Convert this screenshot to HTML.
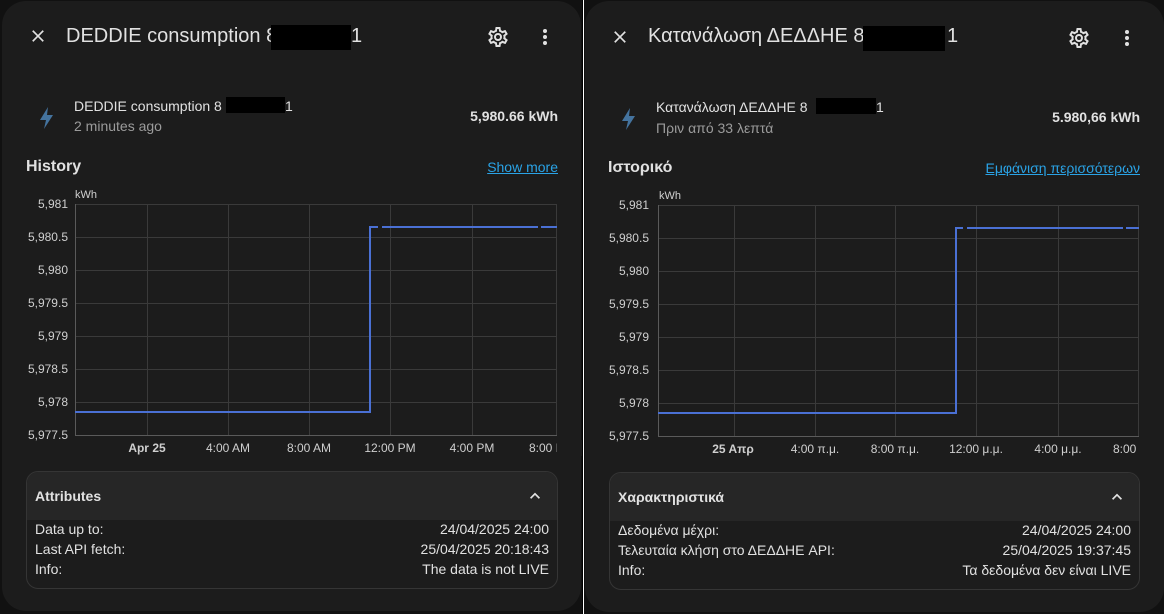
<!DOCTYPE html>
<html><head><meta charset="utf-8"><style>
*{margin:0;padding:0;box-sizing:border-box}
body{width:1164px;height:614px;background:#111;position:relative;overflow:hidden;font-family:"Liberation Sans","DejaVu Sans",sans-serif;color:#e1e1e1}
.p{position:absolute;top:1px;background:#1c1c1c;border-radius:24px;overflow:hidden}
.a{position:absolute;white-space:nowrap}
.r{text-align:right}
.blk{position:absolute;background:#000}
.box{position:absolute;border:1px solid #353535;border-radius:12px;overflow:hidden}
.hd{height:48px;background:#262626;position:relative}
.row{position:absolute;font-size:14px;color:#e1e1e1}
.t{font-size:20px}
</style></head><body>
<div style="position:absolute;left:582px;top:0;width:1px;height:614px;background:#000"></div>
<div style="position:absolute;left:583px;top:0;width:1px;height:614px;background:#fff"></div>

<!-- LEFT PANEL -->
<div class="p" style="left:2px;width:579px;height:610px">
 <svg class="a" style="left:26px;top:25px" width="20" height="20" viewBox="0 0 24 24"><path d="M19 6.4L17.6 5 12 10.6 6.4 5 5 6.4 10.6 12 5 17.6 6.4 19 12 13.4 17.6 19 19 17.6 13.4 12z" fill="#e1e1e1"/></svg>
 <div class="a t" style="left:64px;top:24px">DEDDIE consumption 8</div>
 <div class="blk" style="left:269px;top:24px;width:80px;height:25px"></div>
 <div class="a t" style="left:349px;top:24px">1</div>
 <svg class="a" style="left:484px;top:24px" width="24" height="24" viewBox="0 0 24 24"><path d="M12,8A4,4 0 0,1 16,12A4,4 0 0,1 12,16A4,4 0 0,1 8,12A4,4 0 0,1 12,8M12,10A2,2 0 0,0 10,12A2,2 0 0,0 12,14A2,2 0 0,0 14,12A2,2 0 0,0 12,10M10,22C9.75,22 9.54,21.82 9.5,21.58L9.13,18.93C8.5,18.68 7.96,18.34 7.44,17.94L4.95,18.95C4.73,19.03 4.46,18.95 4.34,18.73L2.34,15.27C2.21,15.05 2.27,14.78 2.46,14.63L4.57,12.97L4.5,12L4.57,11L2.46,9.37C2.27,9.22 2.21,8.95 2.34,8.73L4.34,5.27C4.46,5.05 4.73,4.96 4.95,5.05L7.44,6.05C7.96,5.66 8.5,5.32 9.13,5.07L9.5,2.42C9.54,2.18 9.75,2 10,2H14C14.25,2 14.46,2.18 14.5,2.42L14.87,5.07C15.5,5.32 16.04,5.66 16.56,6.05L19.05,5.05C19.27,4.96 19.54,5.05 19.66,5.27L21.66,8.73C21.79,8.95 21.73,9.22 21.54,9.37L19.43,11L19.5,12L19.43,13L21.54,14.63C21.73,14.78 21.79,15.05 21.66,15.27L19.66,18.73C19.54,18.95 19.27,19.04 19.05,18.95L16.56,17.95C16.04,18.34 15.5,18.68 14.87,18.93L14.5,21.58C14.46,21.82 14.25,22 14,22H10M11.25,4L10.88,6.61C9.68,6.86 8.62,7.5 7.85,8.39L5.44,7.35L4.69,8.65L6.8,10.2C6.4,11.37 6.4,12.64 6.8,13.8L4.68,15.36L5.43,16.66L7.86,15.62C8.63,16.5 9.68,17.14 10.87,17.38L11.24,20H12.76L13.13,17.39C14.32,17.14 15.37,16.5 16.14,15.62L18.57,16.66L19.32,15.36L17.2,13.81C17.6,12.64 17.6,11.37 17.2,10.2L19.31,8.65L18.56,7.35L16.15,8.39C15.38,7.5 14.32,6.86 13.12,6.62L12.75,4H11.25Z" fill="#e1e1e1"/></svg>
 <svg class="a" style="left:531px;top:24px" width="24" height="24" viewBox="0 0 24 24"><circle cx="12" cy="6" r="2" fill="#e1e1e1"/><circle cx="12" cy="12" r="2" fill="#e1e1e1"/><circle cx="12" cy="18" r="2" fill="#e1e1e1"/></svg>
 <svg class="a" style="left:35px;top:105px" width="20" height="24" viewBox="0 0 20 24"><path d="M11 1L3 14h6l-2 9 9-14h-6z" fill="#44739e"/></svg>
 <div class="a" style="left:72px;top:97px;font-size:14px">DEDDIE consumption 8</div>
 <div class="blk" style="left:224px;top:96px;width:59px;height:16px"></div>
 <div class="a" style="left:283px;top:97px;font-size:14px">1</div>
 <div class="a" style="left:72px;top:117px;font-size:14px;color:#9b9b9b">2 minutes ago</div>
 <div class="a r" style="right:23px;top:107px;font-size:14px;font-weight:bold">5,980.66 kWh</div>
 <div class="a" style="left:24px;top:157px;font-size:16px;font-weight:bold">History</div>
 <div class="a r" style="right:23px;top:158px;font-size:14px;color:#2aa3e6;text-decoration:underline">Show more</div>
</div>
<svg class="a" style="left:0;top:0" width="582" height="470" font-family="Liberation Sans,sans-serif" font-size="12" fill="#cfcfcf">
 <g stroke="#3a3a3a" stroke-width="1">
  <line x1="75" y1="204.5" x2="557" y2="204.5"/><line x1="75" y1="237.5" x2="557" y2="237.5"/><line x1="75" y1="270.5" x2="557" y2="270.5"/><line x1="75" y1="303.5" x2="557" y2="303.5"/><line x1="75" y1="336.5" x2="557" y2="336.5"/><line x1="75" y1="369.5" x2="557" y2="369.5"/><line x1="75" y1="402.5" x2="557" y2="402.5"/>
  <line x1="147.5" y1="204" x2="147.5" y2="435"/><line x1="228.5" y1="204" x2="228.5" y2="435"/><line x1="309.5" y1="204" x2="309.5" y2="435"/><line x1="390.5" y1="204" x2="390.5" y2="435"/><line x1="472.5" y1="204" x2="472.5" y2="435"/><line x1="556.5" y1="204" x2="556.5" y2="435"/>
 </g>
 <g stroke="#5a5a5a"><line x1="75.5" y1="204" x2="75.5" y2="436"/><line x1="75" y1="435.5" x2="557" y2="435.5"/></g>
 <path d="M75 412H370V227H378M382 227H538M541 227H557" stroke="#4a70d4" stroke-width="2" fill="none"/>
 <text x="75" y="198" font-size="11">kWh</text>
 <g text-anchor="end"><text x="68" y="208">5,981</text><text x="68" y="241">5,980.5</text><text x="68" y="274">5,980</text><text x="68" y="307">5,979.5</text><text x="68" y="340">5,979</text><text x="68" y="373">5,978.5</text><text x="68" y="406">5,978</text><text x="68" y="439">5,977.5</text></g>
 <g text-anchor="middle"><text x="147" y="452" font-weight="bold">Apr 25</text><text x="228" y="452">4:00 AM</text><text x="309" y="452">8:00 AM</text><text x="390" y="452">12:00 PM</text><text x="472" y="452">4:00 PM</text></g>
 <text x="529" y="452">8:00 P</text>
 <rect x="557" y="440" width="25" height="16" fill="#1c1c1c"/>
</svg>
<div class="box" style="left:26px;top:471px;width:532px;height:118px">
 <div class="hd"><div class="a" style="left:8px;top:16px;font-size:14px;font-weight:bold">Attributes</div>
 <svg class="a" style="right:12px;top:14px" width="20" height="20" viewBox="0 0 24 24"><path d="M7.4 15.4L12 10.8l4.6 4.6L18 14l-6-6-6 6z" fill="#e1e1e1"/></svg></div>
 <div class="row" style="left:8px;top:49px">Data up to:</div><div class="row" style="right:8px;top:49px">24/04/2025 24:00</div>
 <div class="row" style="left:8px;top:69px">Last API fetch:</div><div class="row" style="right:8px;top:69px">25/04/2025 20:18:43</div>
 <div class="row" style="left:8px;top:89px">Info:</div><div class="row" style="right:8px;top:89px">The data is not LIVE</div>
</div>

<!-- RIGHT PANEL -->
<div class="p" style="left:585px;width:579px;height:611px">
 <svg class="a" style="left:25px;top:26px" width="20" height="20" viewBox="0 0 24 24"><path d="M19 6.4L17.6 5 12 10.6 6.4 5 5 6.4 10.6 12 5 17.6 6.4 19 12 13.4 17.6 19 19 17.6 13.4 12z" fill="#e1e1e1"/></svg>
 <div class="a" style="left:63px;top:24px;font-size:20px">Κατανάλωση ΔΕΔΔΗΕ 8</div>
 <div class="blk" style="left:278px;top:25px;width:82px;height:25px"></div>
 <div class="a t" style="left:362px;top:24px">1</div>
 <svg class="a" style="left:482px;top:25px" width="24" height="24" viewBox="0 0 24 24"><path d="M12,8A4,4 0 0,1 16,12A4,4 0 0,1 12,16A4,4 0 0,1 8,12A4,4 0 0,1 12,8M12,10A2,2 0 0,0 10,12A2,2 0 0,0 12,14A2,2 0 0,0 14,12A2,2 0 0,0 12,10M10,22C9.75,22 9.54,21.82 9.5,21.58L9.13,18.93C8.5,18.68 7.96,18.34 7.44,17.94L4.95,18.95C4.73,19.03 4.46,18.95 4.34,18.73L2.34,15.27C2.21,15.05 2.27,14.78 2.46,14.63L4.57,12.97L4.5,12L4.57,11L2.46,9.37C2.27,9.22 2.21,8.95 2.34,8.73L4.34,5.27C4.46,5.05 4.73,4.96 4.95,5.05L7.44,6.05C7.96,5.66 8.5,5.32 9.13,5.07L9.5,2.42C9.54,2.18 9.75,2 10,2H14C14.25,2 14.46,2.18 14.5,2.42L14.87,5.07C15.5,5.32 16.04,5.66 16.56,6.05L19.05,5.05C19.27,4.96 19.54,5.05 19.66,5.27L21.66,8.73C21.79,8.95 21.73,9.22 21.54,9.37L19.43,11L19.5,12L19.43,13L21.54,14.63C21.73,14.78 21.79,15.05 21.66,15.27L19.66,18.73C19.54,18.95 19.27,19.04 19.05,18.95L16.56,17.95C16.04,18.34 15.5,18.68 14.87,18.93L14.5,21.58C14.46,21.82 14.25,22 14,22H10M11.25,4L10.88,6.61C9.68,6.86 8.62,7.5 7.85,8.39L5.44,7.35L4.69,8.65L6.8,10.2C6.4,11.37 6.4,12.64 6.8,13.8L4.68,15.36L5.43,16.66L7.86,15.62C8.63,16.5 9.68,17.14 10.87,17.38L11.24,20H12.76L13.13,17.39C14.32,17.14 15.37,16.5 16.14,15.62L18.57,16.66L19.32,15.36L17.2,13.81C17.6,12.64 17.6,11.37 17.2,10.2L19.31,8.65L18.56,7.35L16.15,8.39C15.38,7.5 14.32,6.86 13.12,6.62L12.75,4H11.25Z" fill="#e1e1e1"/></svg>
 <svg class="a" style="left:530px;top:25px" width="24" height="24" viewBox="0 0 24 24"><circle cx="12" cy="6" r="2" fill="#e1e1e1"/><circle cx="12" cy="12" r="2" fill="#e1e1e1"/><circle cx="12" cy="18" r="2" fill="#e1e1e1"/></svg>
 <svg class="a" style="left:34px;top:106px" width="20" height="24" viewBox="0 0 20 24"><path d="M11 1L3 14h6l-2 9 9-14h-6z" fill="#44739e"/></svg>
 <div class="a" style="left:71px;top:98px;font-size:14px">Κατανάλωση ΔΕΔΔΗΕ 8</div>
 <div class="blk" style="left:231px;top:97px;width:60px;height:16px"></div>
 <div class="a" style="left:291px;top:98px;font-size:14px">1</div>
 <div class="a" style="left:71px;top:119px;font-size:14px;color:#9b9b9b">Πριν από 33 λεπτά</div>
 <div class="a r" style="right:24px;top:108px;font-size:14px;font-weight:bold">5.980,66 kWh</div>
 <div class="a" style="left:23px;top:158px;font-size:16px;font-weight:bold">Ιστορικό</div>
 <div class="a r" style="right:24px;top:159px;font-size:14px;color:#2aa3e6;text-decoration:underline">Εμφάνιση περισσότερων</div>
</div>
<svg class="a" style="left:585px;top:0" width="579" height="470" font-family="Liberation Sans,sans-serif" font-size="12" fill="#cfcfcf">
 <g stroke="#3a3a3a" stroke-width="1">
  <line x1="73" y1="205.5" x2="554" y2="205.5"/><line x1="73" y1="238.5" x2="554" y2="238.5"/><line x1="73" y1="271.5" x2="554" y2="271.5"/><line x1="73" y1="304.5" x2="554" y2="304.5"/><line x1="73" y1="337.5" x2="554" y2="337.5"/><line x1="73" y1="370.5" x2="554" y2="370.5"/><line x1="73" y1="403.5" x2="554" y2="403.5"/>
  <line x1="149.5" y1="205" x2="149.5" y2="436"/><line x1="230.5" y1="205" x2="230.5" y2="436"/><line x1="310.5" y1="205" x2="310.5" y2="436"/><line x1="391.5" y1="205" x2="391.5" y2="436"/><line x1="473.5" y1="205" x2="473.5" y2="436"/><line x1="553.5" y1="205" x2="553.5" y2="436"/>
 </g>
 <g stroke="#5a5a5a"><line x1="73.5" y1="205" x2="73.5" y2="437"/><line x1="73" y1="436.5" x2="554" y2="436.5"/></g>
 <path d="M73 413H371V228H378M382 228H538M541 228H554" stroke="#4a70d4" stroke-width="2" fill="none"/>
 <text x="74" y="199" font-size="11">kWh</text>
 <g text-anchor="end"><text x="64" y="209">5,981</text><text x="64" y="242">5,980.5</text><text x="64" y="275">5,980</text><text x="64" y="308">5,979.5</text><text x="64" y="341">5,979</text><text x="64" y="374">5,978.5</text><text x="64" y="407">5,978</text><text x="64" y="440">5,977.5</text></g>
 <g text-anchor="middle"><text x="148" y="453" font-weight="bold">25 Απρ</text><text x="230" y="453">4:00 π.μ.</text><text x="310" y="453">8:00 π.μ.</text><text x="391" y="453">12:00 μ.μ.</text><text x="473" y="453">4:00 μ.μ.</text></g>
 <text x="528" y="453">8:00</text>
</svg>
<div class="box" style="left:609px;top:472px;width:531px;height:118px">
 <div class="hd"><div class="a" style="left:8px;top:16px;font-size:14px;font-weight:bold">Χαρακτηριστικά</div>
 <svg class="a" style="right:12px;top:14px" width="20" height="20" viewBox="0 0 24 24"><path d="M7.4 15.4L12 10.8l4.6 4.6L18 14l-6-6-6 6z" fill="#e1e1e1"/></svg></div>
 <div class="row" style="left:8px;top:49px">Δεδομένα μέχρι:</div><div class="row" style="right:8px;top:49px">24/04/2025 24:00</div>
 <div class="row" style="left:8px;top:69px">Τελευταία κλήση στο ΔΕΔΔΗΕ API:</div><div class="row" style="right:8px;top:69px">25/04/2025 19:37:45</div>
 <div class="row" style="left:8px;top:89px">Info:</div><div class="row" style="right:8px;top:89px">Τα δεδομένα δεν είναι LIVE</div>
</div>
</body></html>
